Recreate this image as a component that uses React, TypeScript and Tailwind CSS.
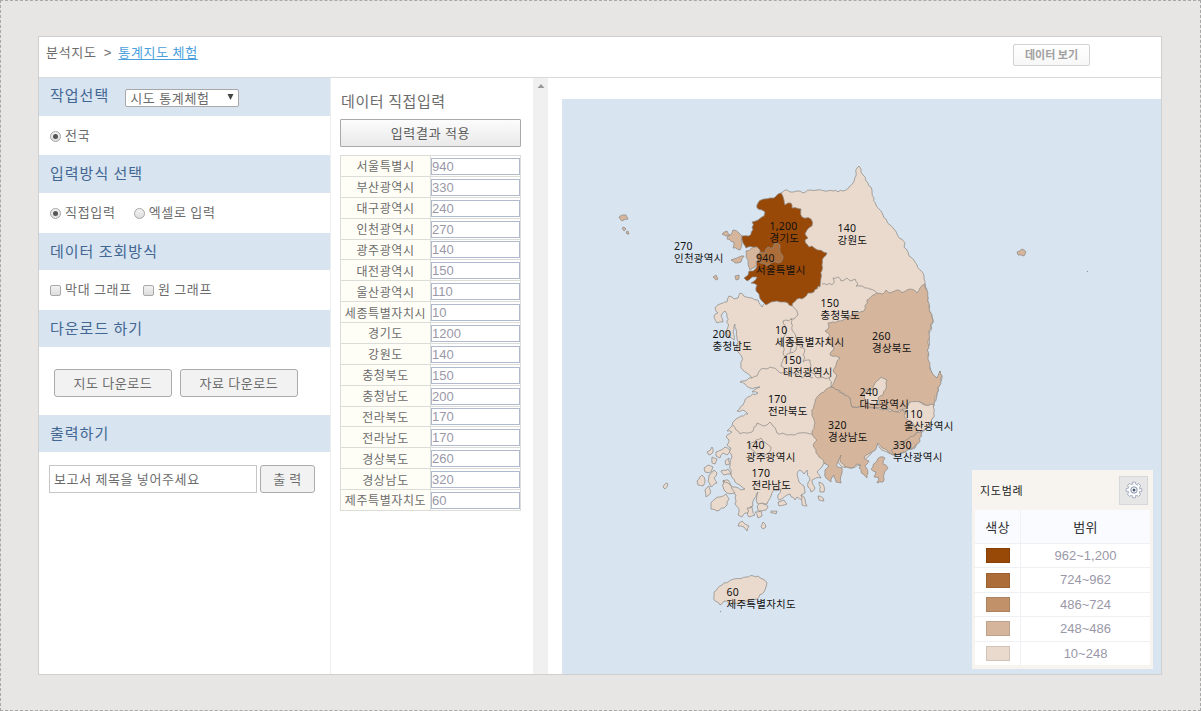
import React from "react";

type Pt = [number, number];

const REGIONS: [string, number][] = [
  ["서울특별시", 940],
  ["부산광역시", 330],
  ["대구광역시", 240],
  ["인천광역시", 270],
  ["광주광역시", 140],
  ["대전광역시", 150],
  ["울산광역시", 110],
  ["세종특별자치시", 10],
  ["경기도", 1200],
  ["강원도", 140],
  ["충청북도", 150],
  ["충청남도", 200],
  ["전라북도", 170],
  ["전라남도", 170],
  ["경상북도", 260],
  ["경상남도", 320],
  ["제주특별자치도", 60],
];

const LABELS: [string, string, number, number][] = [
  ["1,200", "경기도", 769.5, 230],
  ["940", "서울특별시", 756, 261.5],
  ["140", "강원도", 837.5, 232],
  ["270", "인천광역시", 674, 250],
  ["150", "충청북도", 820.5, 307],
  ["200", "충청남도", 712.5, 338],
  ["10", "세종특별자치시", 775, 334],
  ["150", "대전광역시", 783, 363.5],
  ["260", "경상북도", 872, 340],
  ["170", "전라북도", 768, 402.5],
  ["240", "대구광역시", 859.5, 395.5],
  ["110", "울산광역시", 904, 418],
  ["320", "경상남도", 828, 429],
  ["330", "부산광역시", 893, 449],
  ["140", "광주광역시", 746, 449],
  ["170", "전라남도", 751.5, 477],
  ["60", "제주특별자치도", 726.5, 596],
];

const LEGEND: [string, string][] = [
  ["bg-[#984807]", "962~1,200"],
  ["bg-[#ac6d39]", "724~962"],
  ["bg-[#c1916a]", "486~724"],
  ["bg-[#d5b59b]", "248~486"],
  ["bg-[#e9dacd]", "10~248"],
];

function parse(s: string): Pt[] {
  return s.trim().split(/\s+/).map((p) => p.split(",").map(Number) as Pt);
}

// Breaks long straight segments into slightly irregular ones so borders read as natural lines.
function rough(s: string, closed = true, amp = 0.16): string {
  const pts = parse(s);
  const out: string[] = [];
  const n = closed ? pts.length : pts.length - 1;
  let k = 0;
  for (let i = 0; i < n; i++) {
    const [ax, ay] = pts[i];
    const [bx, by] = pts[(i + 1) % pts.length];
    const len = Math.hypot(bx - ax, by - ay);
    out.push(`${ax} ${ay}`);
    const steps = Math.floor(len / 2.4);
    for (let j = 1; j < steps; j++) {
      k++;
      const r = Math.sin((ax + by) * 12.9898 + k * 78.233) * 43758.5453;
      const d = (r - Math.floor(r) - 0.5) * 2 * Math.min(1.1, len * amp);
      const t = j / steps;
      const x = ax + (bx - ax) * t - ((by - ay) / len) * d;
      const y = ay + (by - ay) * t + ((bx - ax) / len) * d;
      out.push(`${x.toFixed(1)} ${y.toFixed(1)}`);
    }
  }
  if (!closed) out.push(pts[pts.length - 1].join(" "));
  return "M" + out.join("L") + (closed ? "Z" : "");
}

const PALE = "#e9dacd";
const TAN = "#d5b59b";

const MAINLAND =
  "781,193 785,190 790,192 797,191 803,193 810,190 817,190 825,191 833,191 843,191 849,187 853,183 856,176 857,168 859,166 861,169 863,175 868,183 872,190 874,198 876,205 883,215 890,225 897,234 905,243 904,247 907,250 909,256 912,258 917,265 924,276 925,284 928,298 930,312 933,320 929,333 928,360 932,373 937,378 940,371 942,376 937,393 934,405 933,418 927,428 922,432 918,442 915,448 903,453 893,455 887,452 880,448 877,443 875,449 870,455 865,460 862,468 858,465 852,468 842,467 838,462 835,465 824,463 822,467 817,472 821,478 816,478 812,480 815,488 811,492 808,487 810,480 807,470 804,474 800,470 797,474 799,482 804,486 805,493 801,495 803,500 797,497 795,500 790,494 787,495 779,500 778,495 781,489 774,490 771,496 767,504 757,503 758,492 754,499 753,506 750,507 749,513 745,513 742,517 738,515 739,509 735,504 736,495 731,491 724,488 723,481 728,480 733,487 741,490 745,489 735,482 731,475 730,463 732,457 729,452 731,448 727,445 729,440 726,437 732,432 727,431 732,426 735,420 741,416 748,414 745,411 737,411 743,405 748,397 758,393 752,392 760,387 750,388 745,384 740,382 752,378 747,373 741,368 742,357 738,352 737,337 735,324 733,332 734,340 729,337 725,332 728,327 727,317 725,311 721,316 723,322 717,323 714,316 718,313 715,308 720,304 727,302 729,296 734,299 738,298 740,293 746,297 752,298 758,300 762,307 775,285 770,240 770,210";

const GYEONGGI =
  "781,193 778,194 774,198 770,198 764,199 758,203 757,208 762,210 765,212 764,216 758,220 752,222 753,230 749,236 742,236 743,243 746,248 757,247 757,266 753,271 749,271 748,275 744,278 747,281 752,277 757,277 751,283 757,285 756,291 759,294 762,301 766,305 777,301 785,302 792,306 797,299 802,299 808,293 814,292 818,286 820,287 821,278 822,265 824,257 827,253 818,250 812,246 809,247 805,240 808,238 805,234 807,230 812,226 811,219 802,217 801,209 792,208 791,203 785,205 784,200";

const GYEONGBUK =
  "925,284 928,298 930,312 933,320 929,333 928,360 932,373 937,378 940,371 942,376 937,393 934,405 925,405 920,402 910,402 907,407 897,412 888,409 877,408 867,407 852,407 850,398 842,393 831,387 837,375 833,370 840,358 836,356 830,355 834,348 832,345 827,342 830,335 825,331 829,327 828,323 843,320 855,313 864,311 867,300 877,293 883,294 886,290 890,293 897,290 904,292 910,289 917,293 920,288";

const GYEONGNAM =
  "831,387 842,393 850,398 852,407 867,407 877,408 897,412 904,410 912,424 920,430 915,435 917,443 903,452 893,455 887,450 882,448 878,443 876,449 870,453 864,458 869,461 865,466 868,473 867,478 863,474 859,468 861,465 857,464 853,468 845,467 840,461 841,455 838,462 837,467 842,468 842,473 841,483 836,482 834,475 831,482 826,478 825,470 829,466 824,463 818,455 813,445 817,440 812,433 815,423 812,413 815,403 817,397 824,392";

const GEOJE = "871,469 875,463 880,457 885,458 883,464 888,468 884,474 883,482 877,483 879,478 874,477 876,472";

const DIVISIONS = [
  "822,284 827,285 834,283 833,278 838,277 841,281 847,278 851,281 855,279 858,284 856,286 862,286 865,288 870,289 877,293",
  "792,306 797,311 798,315 794,319 783,321 787,330 782,340 785,357 790,353 792,340 797,344 805,350 803,362 810,360 812,373 818,378 830,377 831,387",
  "791,318 792,330 797,340 796,350 790,353",
  "785,357 781,366 787,372 797,374 802,378 807,374 813,378",
  "752,378 757,376 760,370 770,367 777,370 780,373 787,372",
  "733,425 740,434 752,432 757,423 763,426 770,422 773,426 777,433 785,434 793,435 800,433 807,433 812,434",
  "750,444 756,440 761,438 766,443 771,447 768,454 760,456 752,450 750,444",
];

const PALE_AREAS = [
  "868,389 873,390 875,383 881,377 887,380 886,389 883,395 878,398 879,405 872,404 865,401 864,395",
  "907,407 910,402 920,402 925,405 934,405 934,417 927,428 922,431 916,430 913,423 904,416",
  "714,592 720,586 731,580 746,577 758,576 767,583 764,592 757,599 745,602 731,604 724,601 720,605 714,600",
  "711,503 715,499 720,497 726,494 729,499 727,505 724,508 717,511 711,509",
  "716,452 721,450 725,447 730,450 727,455 723,453 720,458 716,456",
  "707,452 712,447 713,452 709,455",
  "712,457 717,459 715,464 712,463",
  "704,468 708,465 713,467 711,472 705,472",
  "697,481 702,475 705,481 703,486 698,485",
  "709,475 714,470 717,473 714,478 717,483 711,487 708,481",
  "705,490 709,486 710,494 706,497",
  "725,461 729,458 730,464 726,465",
  "721,471 728,469 731,474 724,475",
  "723,480 728,483 732,489 735,493 727,493 724,490",
  "747,508 752,507 755,515 749,517",
  "757,506 762,503 768,507 766,510 758,511",
  "755,512 761,511 762,516 758,518",
  "778,502 784,500 787,504 779,506",
  "801,495 804,497 807,506 802,505",
  "771,511 777,511 776,514 771,513",
  "819,482 823,484 824,492 820,492",
  "818,496 823,498 824,501 819,500",
  "738,526 742,521 745,524 749,526 747,531 744,527",
  "761,527 763,522 766,527 763,529",
  "663,487 666,483 668,484 665,489",
];

const TAN_AREAS = [
  "722,234 727,231 730,235 726,236",
  "727,239 733,230 739,233 742,236 742,244 740,250 733,248 734,242",
  "731,260 739,257 744,256 741,262 735,263",
  "713,277 716,275 718,279 716,280",
  "735,276 739,275 739,279 736,280",
  "619,217 626,215 628,219 622,221",
  "622,228 624,227 626,229 624,231",
  "626,232 628,231 629,234 627,234",
  "1017,252 1022,249 1026,252 1024,256 1018,255",
  "915,435 921,431 920,441 913,448 903,452 894,455 891,450 899,445 906,440",
];

function KoreaMap() {
  return (
    <svg viewBox="562 99 599 575" className="block h-full w-full">
      <g stroke="#8f8b87" strokeWidth="0.75" strokeLinejoin="round">
        <path d={rough(MAINLAND)} fill={PALE} />
        <path d={rough(GYEONGBUK)} fill={TAN} />
        <path d={rough(GYEONGNAM)} fill={TAN} />
        <path d={rough(GEOJE)} fill={TAN} />
        {TAN_AREAS.map((p) => (
          <path key={p} d={rough(p)} fill={TAN} />
        ))}
        {PALE_AREAS.map((p) => (
          <path key={p} d={rough(p)} fill={PALE} />
        ))}
        <path d={rough(GYEONGGI)} fill="#984807" />
        <path d={rough("746,251 757,247 760,250 758,260 755,267 750,270 748,264 746,257")} fill={TAN} />
        <path
          d={rough("757,258 759,253 765,253 768,247 773,248 775,243 780,245 780,252 783,256 781,262 773,262 767,266 760,263")}
          fill="#ac6d39"
        />
        {DIVISIONS.map((p) => (
          <path key={p} d={rough(p, false)} fill="none" />
        ))}
      </g>
      <circle cx="1087.500" cy="271.500" r="0.7" fill="#8f959c" />
      <circle cx="720.500" cy="611.500" r="0.7" fill="#8f959c" />
      <g
        fill="#111"
        fontSize="10.500"
        style={{ fontFamily: '"Noto Sans", "Noto Sans CJK KR", sans-serif' }}
      >
        {LABELS.map(([value, name, x, y]) => (
          <g key={name} letterSpacing="0.25">
            <text x={x} y={y} fontSize="10.500">
              {value}
            </text>
            <text x={x} y={y + 12}>
              {name}
            </text>
          </g>
        ))}
      </g>
    </svg>
  );
}

function Heading({ children, tall }: { children: React.ReactNode; tall?: boolean }) {
  return (
    <div
      className={`flex items-center bg-[#d8e4f0] pb-[2px] pl-[11px] text-[15px] leading-5 tracking-[1px] text-[#426793] ${
        tall ? "h-[38px]" : "h-[37px]"
      }`}
    >
      {children}
    </div>
  );
}

function Radio({ label, checked }: { label: string; checked?: boolean }) {
  return (
    <label className="flex items-center">
      <span className="mt-[3px] mr-1 flex size-[11px] items-center justify-center rounded-full border border-[#a5a5a5] bg-gradient-to-b from-[#f3f3f3] to-[#dedede]">
        {checked && <span className="size-[5px] rounded-full bg-[#555]" />}
      </span>
      {label}
    </label>
  );
}

function Check({ label }: { label: string }) {
  return (
    <label className="flex items-center">
      <span className="mt-[3px] mr-1 size-[11px] rounded-[2px] border border-[#a9a9a9] bg-gradient-to-b from-[#f3f3f3] to-[#dcdcdc]" />
      {label}
    </label>
  );
}

function Button({ children, className }: { children: React.ReactNode; className: string }) {
  return (
    <button
      className={`flex items-center justify-center rounded-[3px] border border-[#ababab] bg-[#f2f2f2] text-[13px] tracking-[0.6px] text-[#6c6c6c] ${className}`}
    >
      {children}
    </button>
  );
}

function Sidebar() {
  return (
    <aside className="w-[292px] shrink-0 border-r border-[#eeeeee]">
      <Heading tall>
        <span className="-mt-[2px]">작업선택</span>
        <div className="mt-[3px] ml-4 flex h-[18px] w-[114px] items-center justify-between rounded-[2px] border border-[#a8a8a8] bg-white pr-[4px] pl-1 text-[13px] leading-4 tracking-[0.7px] text-[#6c6c6c]">
          <span>시도 통계체험</span>
          <svg viewBox="0 0 7 6" className="mb-px h-[6px] w-[7px]">
            <path d="M0.500 0h6L3.500 6z" fill="#444" />
          </svg>
        </div>
      </Heading>
      <div className="flex h-[39px] items-center pb-[2px] pl-[11px]">
        <Radio label="전국" checked />
      </div>
      <Heading tall>입력방식 선택</Heading>
      <div className="flex h-10 items-center gap-[18px] pb-[2px] pl-[11px]">
        <Radio label="직접입력" checked />
        <Radio label="엑셀로 입력" />
      </div>
      <Heading>데이터 조회방식</Heading>
      <div className="flex h-10 items-center gap-[11px] pb-[2px] pl-[11px]">
        <Check label="막대 그래프" />
        <Check label="원 그래프" />
      </div>
      <Heading>다운로드 하기</Heading>
      <div className="flex h-[68px] items-center gap-2 pt-[4px] pl-[15px]">
        <Button className="h-7 w-[118px]">지도 다운로드</Button>
        <Button className="h-7 w-[118px]">자료 다운로드</Button>
      </div>
      <Heading>출력하기</Heading>
      <div className="flex gap-[3px] pt-[13px] pl-[10px]">
        <div className="flex h-[28px] w-[208px] items-center border border-[#c6c6c6] pl-1 tracking-[0.65px]">
          보고서 제목을 넣어주세요
        </div>
        <Button className="h-7 w-[55px]">출 력</Button>
      </div>
    </aside>
  );
}

function DataEntry() {
  return (
    <section className="w-[202px] shrink-0 pt-[12px] pl-[9px]">
      <h2 className="pl-[1px] text-[15px] leading-[22px] tracking-[0.6px]">데이터 직접입력</h2>
      <button className="mt-[7px] flex h-[28px] w-[181px] items-center justify-center rounded-[1px] border border-[#a9a9a9] bg-gradient-to-b from-[#fcfcfc] to-[#e9e9e9] tracking-[0.7px] text-[#5c5c5c]">
        입력결과 적용
      </button>
      <div className="mt-[8px] flex h-[356px] w-[181px] flex-col border-t border-l border-[#dcdcd8] text-xs tracking-[0.6px]">
        {REGIONS.map(([name, value]) => (
          <div key={name} className="flex min-h-0 flex-1">
            <div className="flex w-[90px] items-center justify-center border-r border-b border-[#dcdcd8] bg-[#fffef6] pt-px leading-4 whitespace-nowrap">
              {name}
            </div>
            <div className="flex flex-1 items-center border-r border-b border-[#dcdcd8] pt-px">
              <div className="flex h-[17px] w-[89px] items-center border border-[#b1b9cc] bg-white font-['Liberation_Sans'] text-[13px] leading-[15px] tracking-normal text-[#9a98a8]">
                {value}
              </div>
            </div>
          </div>
        ))}
      </div>
    </section>
  );
}

function GearIcon() {
  const teeth = Array.from({ length: 8 }, (_, i) => i * 45);
  return (
    <svg viewBox="0 0 18 18" className="size-[18px]" fill="none">
      <g fill="#fff" stroke="#8f9ab0" strokeWidth="0.8">
        {teeth.map((a) => (
          <rect key={a} x="7.300" y="1.200" width="3.400" height="4" rx="0.800" transform={`rotate(${a} 9 9)`} />
        ))}
      </g>
      <circle cx="9" cy="9" r="6" fill="#fff" />
      <circle cx="9" cy="9" r="6" stroke="#9aa4b8" strokeWidth="0.7" strokeDasharray="2.3 2.41" strokeDashoffset="-1.2" />
      <circle cx="9" cy="9" r="3.200" stroke="#75819c" strokeWidth="0.9" />
      <circle cx="9" cy="9" r="1.500" fill="#4a5878" />
    </svg>
  );
}

function Legend() {
  return (
    <div className="absolute right-2 bottom-[5px] h-[199px] w-[181px] bg-[#f7f4f0] px-[3px]">
      <div className="flex h-10 items-center justify-between pr-[2px] pl-[5px] text-[11px] text-[#222]">
        <span>지도범례</span>
        <button className="flex size-[29px] items-center justify-center border border-[#d6d8dd] bg-[#e6e6e6]">
          <GearIcon />
        </button>
      </div>
      <div className="flex h-[33px] bg-[#f9fbff] text-[13px] tracking-[0.3px] text-[#333]">
        <div className="flex w-[46px] items-center justify-center border-r border-[#f0f1f4]">색상</div>
        <div className="flex flex-1 items-center justify-center">범위</div>
      </div>
      <div className="flex h-[122px] flex-col bg-white">
        {LEGEND.map(([color, range]) => (
          <div key={range} className="flex min-h-0 flex-1 border-t border-[#eff0f3]">
            <div className="flex w-[46px] items-center justify-center border-r border-[#eff0f3]">
              <span className={`h-[15px] w-6 border border-black/10 ${color}`} />
            </div>
            <div className="flex flex-1 items-center justify-center font-['Liberation_Sans'] text-[13px] tracking-normal text-[#9a98a8]">
              {range}
            </div>
          </div>
        ))}
      </div>
    </div>
  );
}

export default function App() {
  return (
    <div className="h-[711px] w-[1201px] border border-dashed border-[#a8a8a8] bg-[#e8e6e4] pt-[35px] pl-[37px] font-['Noto_Sans_CJK_KR',sans-serif] text-[13px] tracking-[0.7px] text-[#6c6c6c]">
      <div className="flex h-[639px] w-[1124px] flex-col border border-[#cfcfcf] bg-white">
        <header className="flex h-[41px] shrink-0 justify-between border-b border-[#d9d9d9] pl-[7px]">
          <div className="flex h-[30px] items-center">
            <span>분석지도</span>
            <span className="mx-[7px] mt-px font-['Liberation_Sans'] tracking-normal">&gt;</span>
            <a className="text-[#4a9fdc] underline underline-offset-2">통계지도 체험</a>
          </div>
          <button className="mt-[7px] mr-[71px] flex h-[22px] w-[77px] items-center justify-center rounded-[2px] border border-[#d2d2d2] bg-gradient-to-b from-white to-[#f7f7f7] pb-px text-[11px] font-bold tracking-[0px] text-[#a0a0a0]">
            데이터 보기
          </button>
        </header>
        <div className="flex min-h-0 flex-1">
          <Sidebar />
          <DataEntry />
          <div className="flex w-[15px] shrink-0 justify-center bg-[#f0f0f0] pt-[6px]">
            <svg viewBox="0 0 8 4" className="h-1 w-2">
              <path d="M0.500 4L4 0l3.500 4z" fill="#999" />
            </svg>
          </div>
          <main className="relative mt-[21px] ml-[14px] flex-1 bg-[#d8e4f0]">
            <KoreaMap />
            <Legend />
          </main>
        </div>
      </div>
    </div>
  );
}
